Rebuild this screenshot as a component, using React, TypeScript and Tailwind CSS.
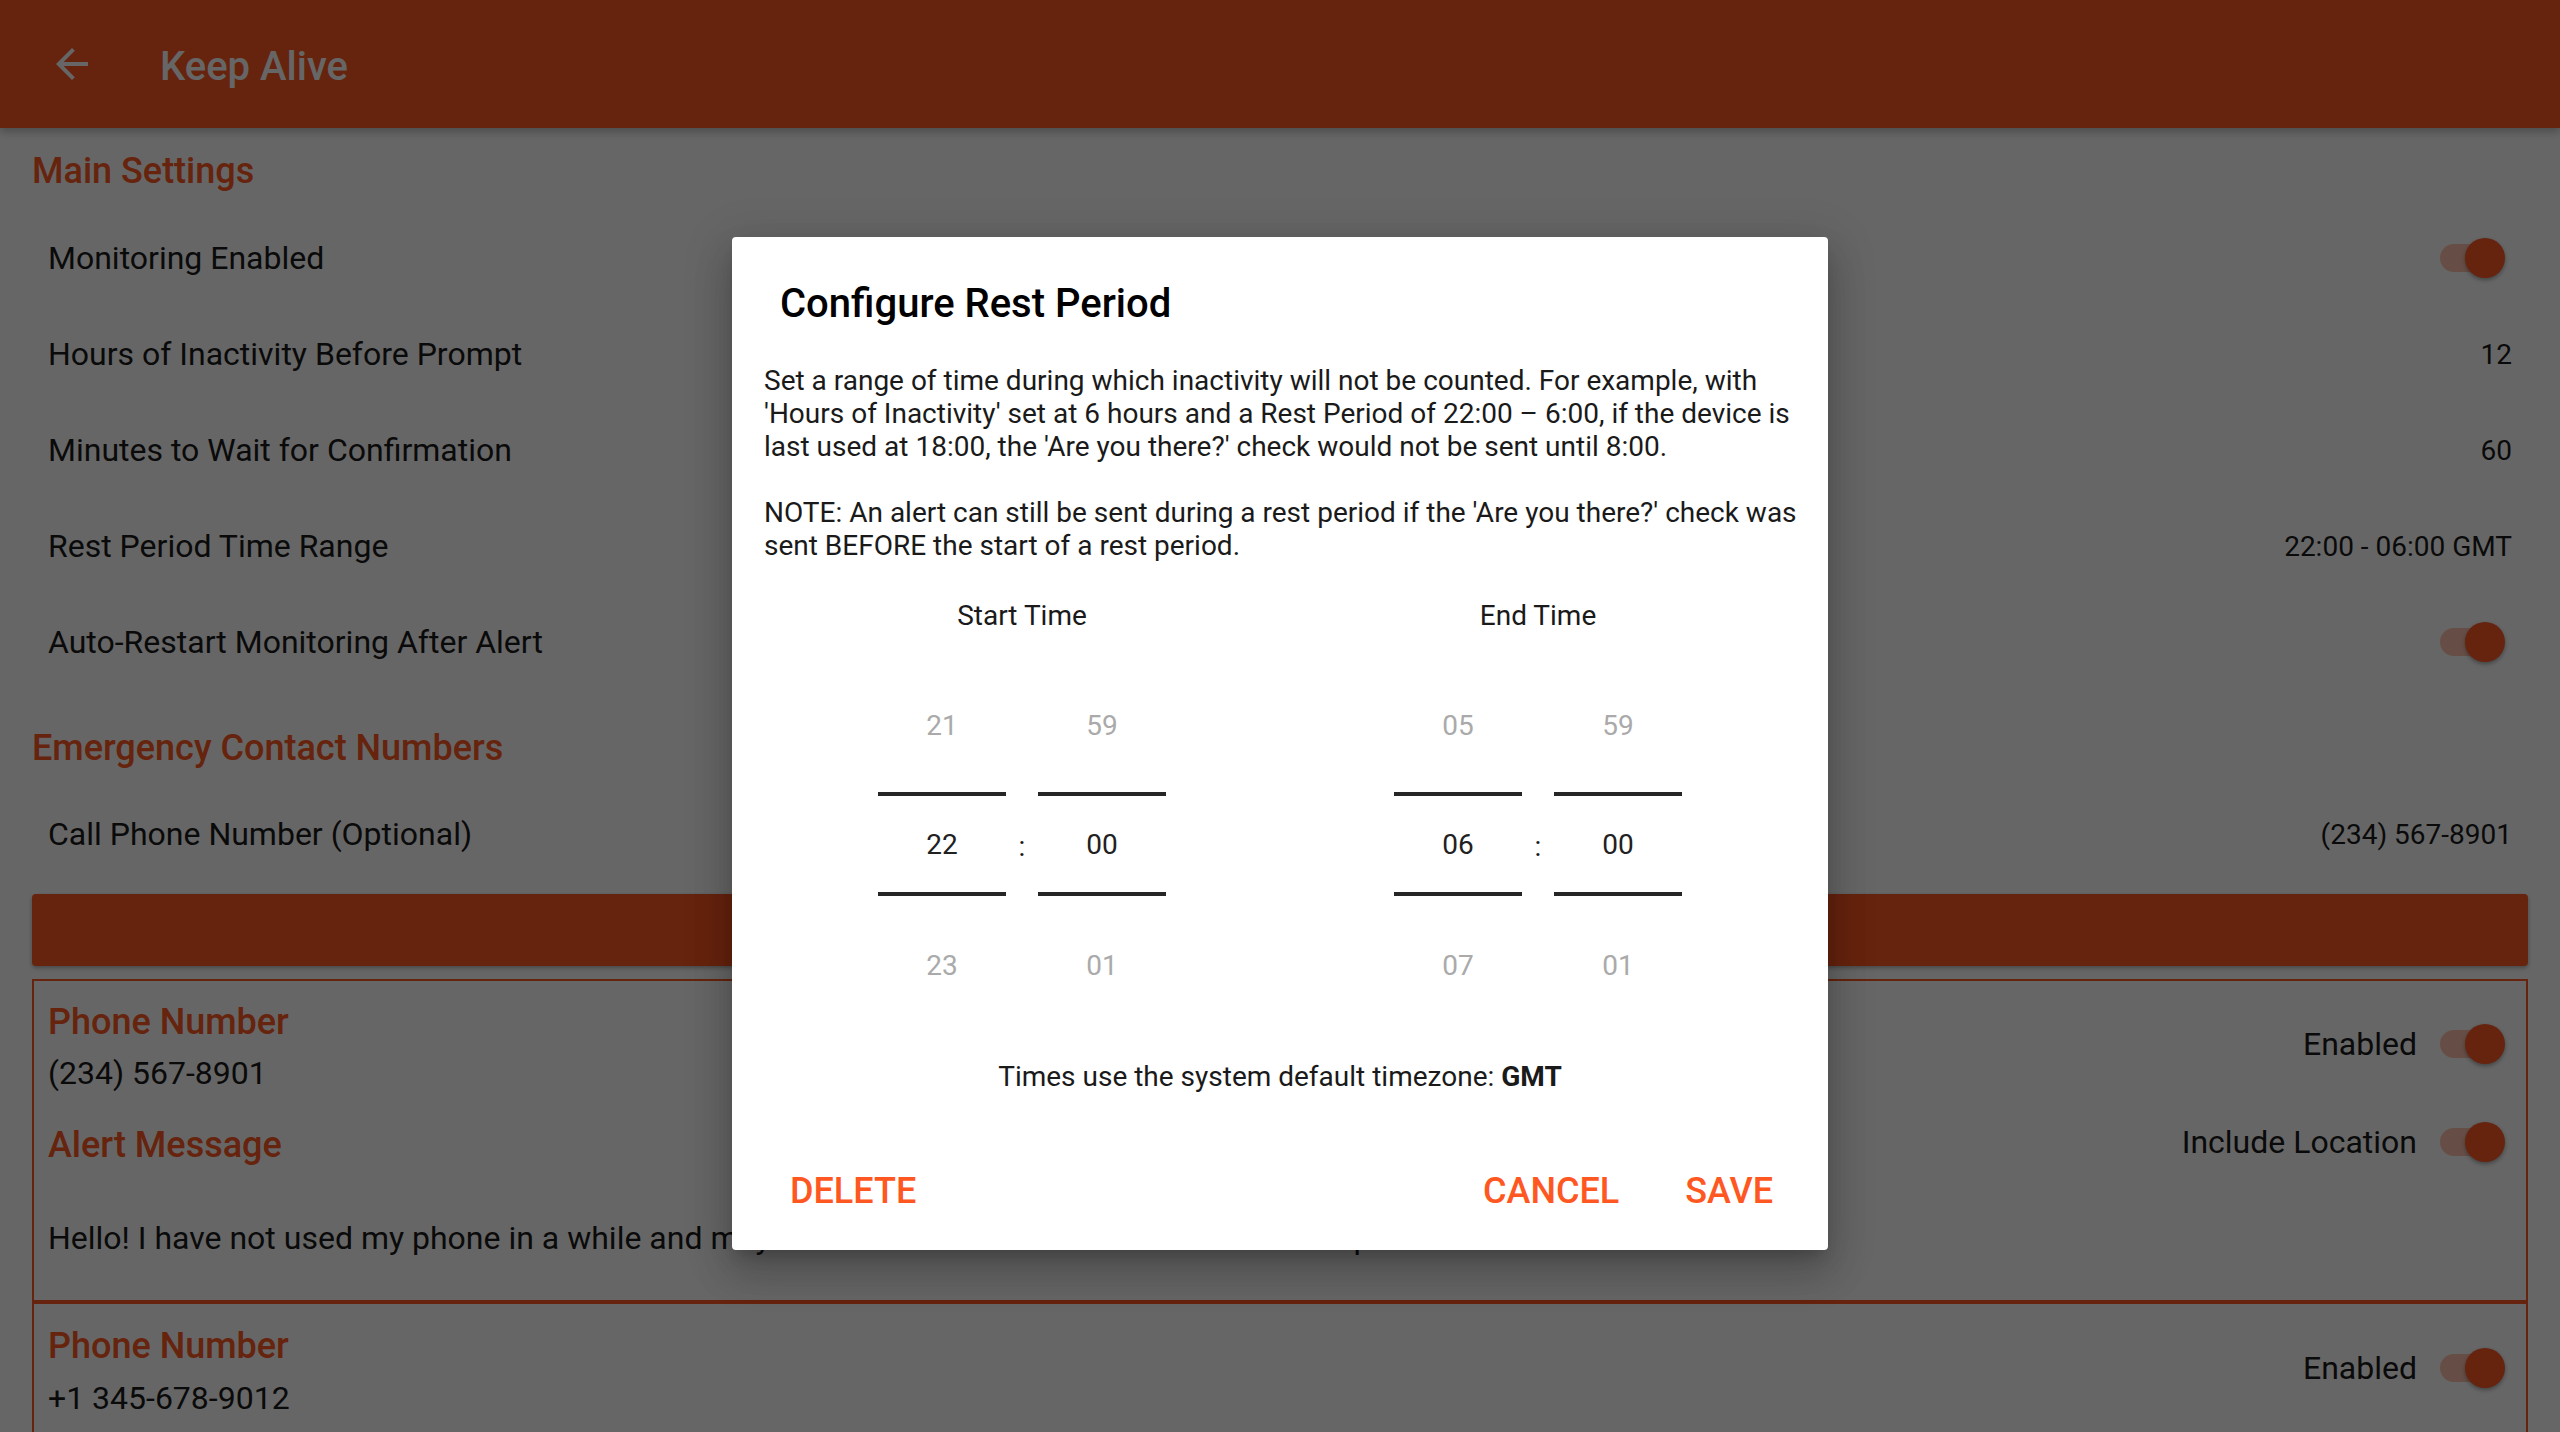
import React from 'react';

function BackArrow() {
  return (
    <svg viewBox="0 0 24 24" className="h-[48px] w-[48px] fill-white">
      <path d="M20 11H7.83l5.59-5.59L12 4l-8 8 8 8 1.41-1.41L7.83 13H20v-2z" />
    </svg>
  );
}

function Toggle() {
  return (
    <div className="relative h-[40px] w-[65px] shrink-0">
      <div className="absolute left-0 top-[6px] h-[28px] w-[60px] rounded-full bg-[#ff5722]/35" />
      <div className="absolute right-0 top-0 h-[40px] w-[40px] rounded-full bg-[#ff5722] shadow-[0_2px_4px_rgba(0,0,0,0.35)]" />
    </div>
  );
}

interface RowProps {
  label: string;
  value?: string;
  toggle?: boolean;
  height: string;
}

function SettingRow({ label, value, toggle, height }: RowProps) {
  return (
    <div className={`flex ${height} items-center justify-between px-[48px]`}>
      <span className="text-[32px] leading-[38px]">{label}</span>
      {toggle ? (
        <div className="mr-[7px]">
          <Toggle />
        </div>
      ) : (
        <span className="text-[28px] leading-[33px]">{value}</span>
      )}
    </div>
  );
}

function Wheel({ prev, cur, next }: { prev: string; cur: string; next: string }) {
  return (
    <div className="flex w-[128px] flex-col items-center text-[28px] leading-[33px]">
      <div className="flex h-[134px] items-center text-[#aaaaaa]">{prev}</div>
      <div className="h-[4px] w-full bg-[#262626]" />
      <div className="flex h-[96px] items-center text-[#212121]">{cur}</div>
      <div className="h-[4px] w-full bg-[#262626]" />
      <div className="flex h-[138px] items-center text-[#aaaaaa]">{next}</div>
    </div>
  );
}

function TimeColumn({ label, hours, minutes }: { label: string; hours: string[]; minutes: string[] }) {
  return (
    <div className="flex flex-1 flex-col items-center">
      <div className="text-[28px] leading-[33px]">{label}</div>
      <div className="mt-[26px] flex items-center">
        <Wheel prev={hours[0]} cur={hours[1]} next={hours[2]} />
        <div className="w-[32px] text-center text-[28px] leading-[33px]">:</div>
        <Wheel prev={minutes[0]} cur={minutes[1]} next={minutes[2]} />
      </div>
    </div>
  );
}

export default function App() {
  return (
    <div className="relative h-screen w-full overflow-hidden bg-white font-['Roboto',sans-serif] text-[#1a1a1a]">
      <header className="flex h-[128px] items-center bg-[#ff5722] shadow-[0_4px_8px_rgba(0,0,0,0.25)]">
        <div className="ml-[48px]">
          <BackArrow />
        </div>
        <h1 className="ml-[64px] pt-[6px] text-[40px] font-medium leading-[48px] text-white">Keep Alive</h1>
      </header>

      <div className="flex h-[82px] items-center px-[32px] pt-[4px] text-[36px] font-medium text-[#ff5722]">
        Main Settings
      </div>
      <SettingRow label="Monitoring Enabled" toggle height="h-[96px]" />
      <SettingRow label="Hours of Inactivity Before Prompt" value="12" height="h-[96px]" />
      <SettingRow label="Minutes to Wait for Confirmation" value="60" height="h-[96px]" />
      <SettingRow label="Rest Period Time Range" value="22:00 - 06:00 GMT" height="h-[96px]" />
      <SettingRow label="Auto-Restart Monitoring After Alert" toggle height="h-[96px]" />

      <div className="flex h-[112px] items-center px-[32px] pt-[4px] text-[36px] font-medium text-[#ff5722]">
        Emergency Contact Numbers
      </div>
      <SettingRow label="Call Phone Number (Optional)" value="(234) 567-8901" height="h-[64px]" />

      <div className="mx-[32px] mt-[28px] h-[72px] rounded-[4px] bg-[#ff5722] shadow-[0_2px_4px_rgba(0,0,0,0.3)]" />

      {/* first contact */}
      <div className="mx-[32px] mt-[13px] flex border-2 border-[#ff5722]">
        <div className="flex min-w-0 flex-1 flex-col pl-[14px] pt-[20px] pb-[43px]">
          <div className="text-[36px] font-medium leading-[42px] text-[#ff5722]">Phone Number</div>
          <div className="mt-[11px] text-[32px] leading-[38px]">(234) 567-8901</div>
          <div className="mt-[32px] text-[36px] font-medium leading-[42px] text-[#ff5722]">Alert Message</div>
          <div className="mt-[53px] whitespace-nowrap text-[32px] leading-[38px]">
            Hello! I have not used my phone in a while and may not be able to reach out. Please send help.
          </div>
        </div>
        <div className="flex flex-col items-end pr-[21px] pt-[39px]">
          <div className="flex h-[48px] items-center gap-[23px]">
            <span className="text-[32px] leading-[38px]">Enabled</span>
            <Toggle />
          </div>
          <div className="mt-[50px] flex h-[48px] items-center gap-[23px]">
            <span className="text-[32px] leading-[38px]">Include Location</span>
            <Toggle />
          </div>
        </div>
      </div>

      {/* second contact, runs past the bottom of the screen */}
      <div className="mx-[32px] flex h-[200px] border-2 border-[#ff5722]">
        <div className="flex min-w-0 flex-1 flex-col pl-[14px] pt-[21px]">
          <div className="text-[36px] font-medium leading-[42px] text-[#ff5722]">Phone Number</div>
          <div className="mt-[12px] text-[32px] leading-[38px]">+1 345-678-9012</div>
        </div>
        <div className="flex flex-col items-end pr-[21px] pt-[40px]">
          <div className="flex h-[48px] items-center gap-[23px]">
            <span className="text-[32px] leading-[38px]">Enabled</span>
            <Toggle />
          </div>
        </div>
      </div>

      {/* dim overlay + dialog */}
      <div className="absolute inset-0 bg-black/60 pt-[237px]">
        <div className="mx-auto w-[1096px] rounded-[4px] bg-white text-[#1a1a1a] shadow-[0_11px_15px_-7px_rgba(0,0,0,0.2),0_24px_38px_3px_rgba(0,0,0,0.14),0_9px_46px_8px_rgba(0,0,0,0.12)]">
          <h2 className="px-[48px] pt-[43px] text-[40px] font-medium leading-[48px] text-black">
            Configure Rest Period
          </h2>
          <p className="mt-[36px] whitespace-pre-line pl-[32px] pr-[22px] text-[28px] leading-[33px]">
            {"Set a range of time during which inactivity will not be counted. For example, with 'Hours of Inactivity' set at 6 hours and a Rest Period of 22:00 – 6:00, if the device is last used at 18:00, the 'Are you there?' check would not be sent until 8:00.\n\nNOTE: An alert can still be sent during a rest period if the 'Are you there?' check was sent BEFORE the start of a rest period."}
          </p>
          <div className="mt-[37px] flex px-[32px]">
            <TimeColumn label="Start Time" hours={['21', '22', '23']} minutes={['59', '00', '01']} />
            <TimeColumn label="End Time" hours={['05', '06', '07']} minutes={['59', '00', '01']} />
          </div>
          <p className="mt-[26px] text-center text-[28px] leading-[33px]">
            Times use the system default timezone: <span className="font-bold">GMT</span>
          </p>
          <div className="mt-[77px] flex items-center pb-[38px] pl-[58px] pr-[55px] text-[36px] font-medium leading-[42px] text-[#ff5722]">
            <button>DELETE</button>
            <div className="flex-1" />
            <button>CANCEL</button>
            <button className="ml-[66px]">SAVE</button>
          </div>
        </div>
      </div>
    </div>
  );
}
